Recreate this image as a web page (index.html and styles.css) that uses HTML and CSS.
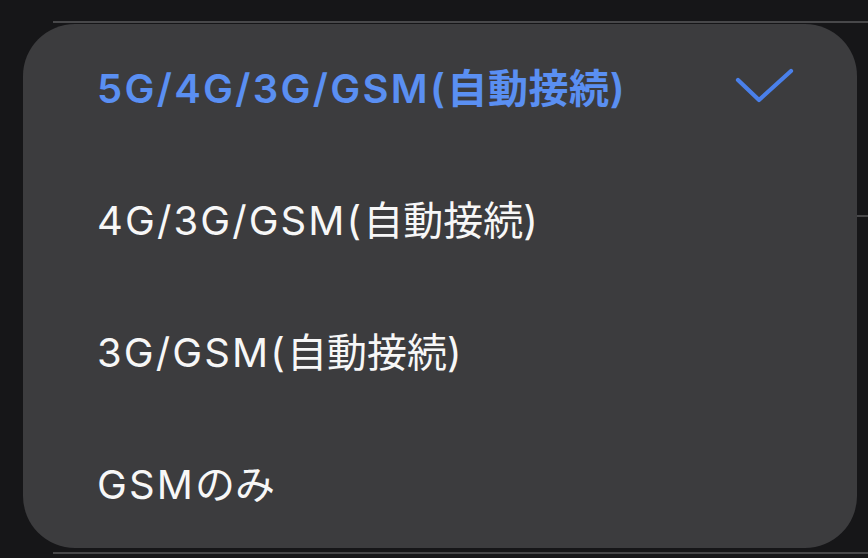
FILE: index.html
```html
<!DOCTYPE html>
<html lang="ja">
<head>
<meta charset="utf-8">
<link rel="stylesheet" href="styles.css">
</head>
<body>
<div class="backdrop">
  <div class="bg-row bg-row-1"></div>
  <div class="bg-row bg-row-2"></div>
  <div class="bg-row bg-row-3"></div>
</div>
<div class="menu">
  <div class="item selected">
    <span class="label"><span class="lat">5G/4G/3G/GSM(</span>自動接続<span class="lat">)</span></span>
    <svg class="check" width="60" height="40" viewBox="0 0 60 40"><path d="M3 12 L24 32 L56 3" fill="none" stroke="#4a80ea" stroke-width="4.2" stroke-linecap="round" stroke-linejoin="round"/></svg>
  </div>
  <div class="item"><span class="label"><span class="lat">4G/3G/GSM(</span>自動接続<span class="lat">)</span></span></div>
  <div class="item"><span class="label"><span class="lat">3G/GSM(</span>自動接続<span class="lat">)</span></span></div>
  <div class="item"><span class="label"><span class="lat">GSM</span>のみ</span></div>
</div>
</body>
</html>
```
FILE: styles.css
```css
html, body {
  margin: 0;
  padding: 0;
  background: #161618;
  width: 868px;
  height: 558px;
  overflow: hidden;
  font-family: Inter, "Noto Sans CJK JP", sans-serif;
}
.backdrop {
  margin-left: 53px;
}
.bg-row {
  border-bottom: 2px solid #48484a;
}
.bg-row-1 { height: 21px; }
.bg-row-2 { height: 192px; }
.bg-row-3 { height: 335px; }
.menu {
  position: absolute;
  left: 23px;
  top: 24px;
  width: 834px;
  height: 524px;
  background: #3c3c3e;
  border-radius: 52px;
  display: grid;
  grid-template-rows: repeat(4, 132px);
}
.item {
  display: flex;
  align-items: center;
  justify-content: space-between;
  padding: 0 62px 8px 74px;
  color: #f7f7f7;
  font-size: 40px;
}
.lat {
  letter-spacing: 2.1px;
}
.item.selected {
  color: #5a8ff2;
  font-weight: 600;
}
.item.selected .lat {
  letter-spacing: 2.3px;
}
.item.selected .label {
  letter-spacing: 0.6px;
}
.item.selected .check {
  margin-top: 4px;
}
.check {
  display: block;
}
```
